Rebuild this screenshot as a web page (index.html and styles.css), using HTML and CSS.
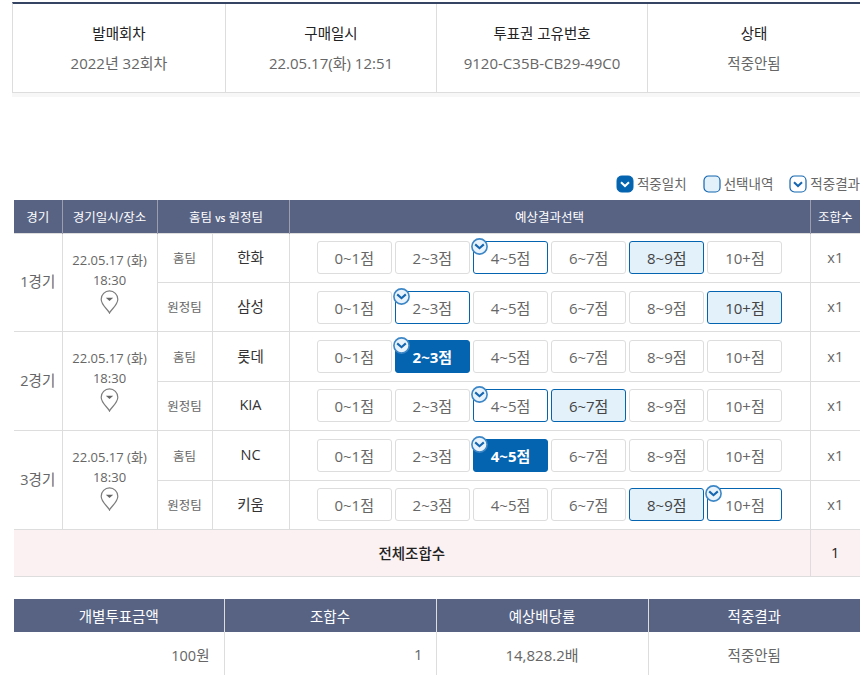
FILE: index.html
```html
<!DOCTYPE html>
<html lang="ko">
<head>
<meta charset="utf-8">
<title>투표권</title>
<link rel="stylesheet" href="styles.css">
</head>
<body>
<svg class="defs" width="0" height="0" aria-hidden="true">
  <symbol id="pin" viewBox="0 0 20 26">
    <path d="M10 25 C8.4 21 1 16.5 1 10 a9 9 0 0 1 18 0 C19 16.5 11.6 21 10 25 Z" fill="#fff" stroke="#7d7d7d" stroke-width="1.3"/>
    <path d="M6 8.5 h8 l-4 3.5 Z" fill="#666"/>
  </symbol>
  <symbol id="badge" viewBox="0 0 17 17">
    <circle cx="8.5" cy="8.5" r="7.6" fill="#e8f3fb" stroke="#3d87c6" stroke-width="1.6"/>
    <path d="M4.2 6.4 L8.5 10.2 L12.8 6.4" fill="none" stroke="#1566b0" stroke-width="2.1"/>
  </symbol>
</svg>
<main class="page">
  <section class="summary">
    <div class="summary-cell"><strong>발매회차</strong><span>2022년 32회차</span></div>
    <div class="summary-cell"><strong>구매일시</strong><span>22.05.17(화) 12:51</span></div>
    <div class="summary-cell"><strong>투표권 고유번호</strong><span>9120-C35B-CB29-49C0</span></div>
    <div class="summary-cell"><strong>상태</strong><span class="plain">적중안됨</span></div>
  </section>

  <ul class="legend">
    <li><svg class="lg" viewBox="0 0 18 18"><rect x="1" y="1" width="16" height="16" rx="4.5" fill="#0564af" stroke="#0564af"/><path d="M5 7.2 L9 11 L13 7.2" fill="none" stroke="#fff" stroke-width="2"/></svg>적중일치</li>
    <li><svg class="lg" viewBox="0 0 18 18"><rect x="1" y="1" width="16" height="16" rx="4.5" fill="#e3f1fb" stroke="#1566b0" stroke-width="1.2"/></svg>선택내역</li>
    <li><svg class="lg" viewBox="0 0 18 18"><rect x="1" y="1" width="16" height="16" rx="4.5" fill="#fff" stroke="#1566b0" stroke-width="1.2"/><path d="M5 7.2 L9 11 L13 7.2" fill="none" stroke="#1566b0" stroke-width="2"/></svg>적중결과</li>
  </ul>

  <table class="games">
    <colgroup><col class="c1"><col class="c2"><col class="c3"><col class="c4"><col class="c5"><col class="c6"></colgroup>
    <thead>
      <tr><th>경기</th><th>경기일시/장소</th><th colspan="2" class="versus">홈팀 <small>vs</small> 원정팀</th><th>예상결과선택</th><th>조합수</th></tr>
    </thead>
    <tbody>
      <tr class="r49">
        <td rowspan="2" class="round">1경기</td>
        <td rowspan="2" class="when">22.05.17 (화)<br>18:30<svg class="pin"><use href="#pin"/></svg></td>
        <td class="side">홈팀</td><td class="team">한화</td>
        <td><div class="picks"><span>0~1점</span><span>2~3점</span><span class="res"><svg class="chk"><use href="#badge"/></svg>4~5점</span><span>6~7점</span><span class="sel">8~9점</span><span>10+점</span></div></td>
        <td class="mul">x1</td>
      </tr>
      <tr class="r49">
        <td class="side">원정팀</td><td class="team">삼성</td>
        <td class="low"><div class="picks"><span>0~1점</span><span class="res"><svg class="chk"><use href="#badge"/></svg>2~3점</span><span>4~5점</span><span>6~7점</span><span>8~9점</span><span class="sel">10+점</span></div></td>
        <td class="mul">x1</td>
      </tr>
      <tr class="r50">
        <td rowspan="2" class="round">2경기</td>
        <td rowspan="2" class="when">22.05.17 (화)<br>18:30<svg class="pin"><use href="#pin"/></svg></td>
        <td class="side">홈팀</td><td class="team">롯데</td>
        <td><div class="picks"><span>0~1점</span><span class="hit"><svg class="chk"><use href="#badge"/></svg>2~3점</span><span>4~5점</span><span>6~7점</span><span>8~9점</span><span>10+점</span></div></td>
        <td class="mul">x1</td>
      </tr>
      <tr class="r49">
        <td class="side">원정팀</td><td class="team">KIA</td>
        <td><div class="picks"><span>0~1점</span><span>2~3점</span><span class="res"><svg class="chk"><use href="#badge"/></svg>4~5점</span><span class="sel">6~7점</span><span>8~9점</span><span>10+점</span></div></td>
        <td class="mul">x1</td>
      </tr>
      <tr class="r50">
        <td rowspan="2" class="round">3경기</td>
        <td rowspan="2" class="when">22.05.17 (화)<br>18:30<svg class="pin"><use href="#pin"/></svg></td>
        <td class="side">홈팀</td><td class="team">NC</td>
        <td><div class="picks"><span>0~1점</span><span>2~3점</span><span class="hit"><svg class="chk"><use href="#badge"/></svg>4~5점</span><span>6~7점</span><span>8~9점</span><span>10+점</span></div></td>
        <td class="mul">x1</td>
      </tr>
      <tr class="r49">
        <td class="side">원정팀</td><td class="team">키움</td>
        <td><div class="picks"><span>0~1점</span><span>2~3점</span><span>4~5점</span><span>6~7점</span><span class="sel">8~9점</span><span class="res"><svg class="chk"><use href="#badge"/></svg>10+점</span></div></td>
        <td class="mul">x1</td>
      </tr>
      <tr class="total"><td colspan="5">전체조합수</td><td>1</td></tr>
    </tbody>
  </table>

  <table class="payout">
    <colgroup><col class="p1"><col class="p2"><col class="p3"><col class="p4"></colgroup>
    <thead><tr><th>개별투표금액</th><th>조합수</th><th>예상배당률</th><th>적중결과</th></tr></thead>
    <tbody><tr><td class="money">100원</td><td class="count">1</td><td class="rate">14,828.2배</td><td>적중안됨</td></tr></tbody>
  </table>
</main>
</body>
</html>
```
FILE: styles.css
```css
* { box-sizing: border-box; }
html, body { margin: 0; padding: 0; height: 675px; overflow: hidden; background: #fff; }
body { font-family: "Open Sans", "Noto Sans CJK KR", sans-serif; color: #666; font-size: 14.5px; }
.defs { position: absolute; }
.page { width: 860px; padding: 2px 0 0 12px; }

.summary { display: flex; height: 91px; border-top: 2px solid #354463; border-left: 1px solid #ddd; border-bottom: 1px solid #ddd; box-shadow: 0 4px 0 #f7f7f7; }
.summary-cell { width: 211px; border-right: 1px solid #ddd; display: flex; flex-direction: column; align-items: center; padding-top: 19px; gap: 9px; line-height: 21px; }
.summary-cell:first-child { width: 213px; }
.summary-cell:last-child { flex: 1; border-right: 0; }
.summary-cell strong { font-weight: 400; color: #222; }
.summary-cell span { color: #666; font-size: 15px; }
.summary-cell .plain { font-size: 14.5px; }

.legend { list-style: none; margin: 82px 0 0; padding: 0; display: flex; justify-content: flex-end; gap: 16px; height: 25px; font-size: 13.5px; line-height: 18px; }
.legend li { display: flex; align-items: center; gap: 3px; height: 18px; }
.lg { width: 18px; height: 18px; }

table { border-collapse: collapse; table-layout: fixed; margin-left: 2px; width: 846px; }
th { background: #586384; color: #fff; font-weight: 400; height: 33px; padding: 0; font-size: 12.5px; border-left: 1px solid #9a9fae; }
th:first-child { border-left: 0; }
th small { font-size: 10px; font-weight: 600; }
th.versus { padding-left: 6px; }
.c1 { width: 48px; } .c2 { width: 95px; } .c3 { width: 55px; } .c4 { width: 77px; } .c5 { width: 521px; } .c6 { width: 50px; }
.p1 { width: 210px; } .p2 { width: 212px; } .p3 { width: 212px; } .p4 { width: 212px; }

.games td { border: 1px solid #ddd; padding: 0; text-align: center; }
.games td:first-child { border-left: 0; }
.games td:last-child { border-right: 0; }
.games td.low { padding-top: 2px; }
.r50 { height: 50px; } .r49 { height: 49px; }
.games td.round { font-size: 14.5px; padding-bottom: 3px; }
.games td.when { font-size: 13px; line-height: 20px; vertical-align: top; padding-top: 16px; }
.pin { display: block; width: 19px; height: 24px; margin: 0 auto; }
.side { font-size: 12.5px; }
.games td.team { font-size: 14.5px; color: #333; padding-bottom: 2px; }
.mul { font-size: 14.5px; }

.picks { display: flex; justify-content: center; gap: 3.05px; padding-left: 0.2px; }
.picks span { position: relative; width: 75.1px; height: 33px; border: 1px solid #ddd; border-radius: 3px; display: flex; align-items: center; justify-content: center; color: #666; font-size: 15px; }
.picks .sel { background: #e3f1fb; border-color: #0564af; color: #444; }
.picks .res { border-color: #0564af; }
.picks .hit { background: #0564af; border-color: #0564af; color: #fff; font-weight: 700; }
.chk { position: absolute; left: -3px; top: -4px; width: 17px; height: 17px; }

.total td { height: 47px; background: #fbf1f2; color: #222; font-weight: 500; }
.games .total td:last-child { font-weight: 400; }

.payout { margin-top: 22px; }
.payout th { font-size: 14.5px; border-left-color: #ddd; }
.payout td { height: 44px; padding: 1px 0 0; text-align: center; border-left: 1px solid #ddd; }
.payout td:first-child { border-left: 0; }
.payout td.money { text-align: right; padding-right: 14px; }
.payout td.count { text-align: right; padding-right: 13px; font-size: 15px; }
.payout td.rate { font-size: 15px; }
```
